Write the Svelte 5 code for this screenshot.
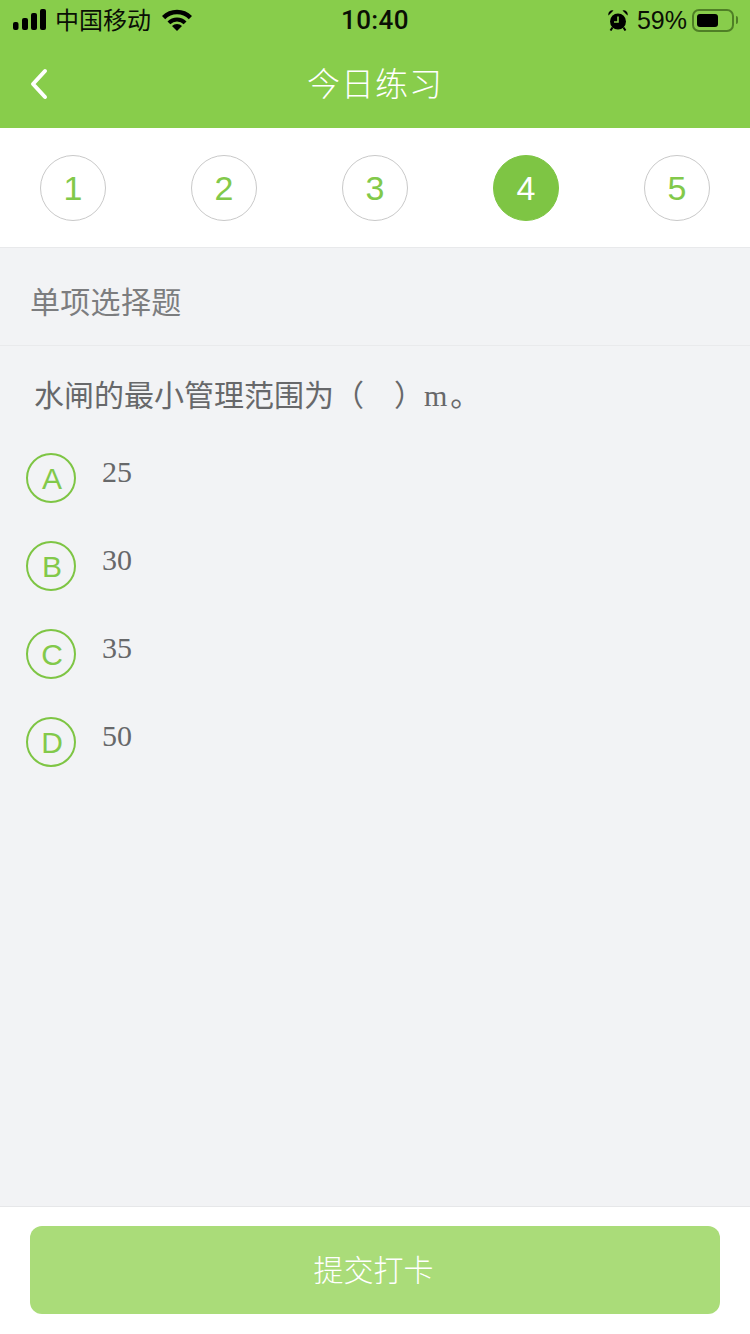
<script>
    const steps = [1, 2, 3, 4, 5];
    const current = 4;
    const options = [
        { key: "A", text: "25" },
        { key: "B", text: "30" },
        { key: "C", text: "35" },
        { key: "D", text: "50" }
    ];
</script>

<div class="page">
    <header class="top">
        <div class="status">
            <div class="status-left">
                <svg class="signal" width="33" height="21" viewBox="0 0 33 21">
                    <rect x="0" y="13" width="5.5" height="8" rx="2" />
                    <rect x="9" y="9" width="6" height="12" rx="2" />
                    <rect x="18" y="4" width="6" height="17" rx="2" />
                    <rect x="27" y="0" width="6" height="21" rx="2" />
                </svg>
                <span class="carrier">中国移动</span>
                <svg class="wifi" width="30" height="22" viewBox="0 0 30 22">
                    <path d="M15 22L10 17A7 7 0 0 1 20 17z" />
                    <path d="M6.9 13.9A11.5 11.5 0 0 1 23.1 13.9" fill="none" stroke="#000" stroke-width="4" />
                    <path d="M1.6 8.6A19 19 0 0 1 28.4 8.6" fill="none" stroke="#000" stroke-width="4.5" />
                </svg>
            </div>
            <span class="time">10:40</span>
            <div class="status-right">
                <svg class="alarm" width="20" height="22" viewBox="0 0 20 22">
                    <circle cx="10" cy="12.5" r="8" />
                    <path d="M0.5 6.5A4 4 0 0 1 5.5 1.5zM19.5 6.5A4 4 0 0 0 14.5 1.5z" />
                    <path d="M4.5 18.5l-2 3M15.5 18.5l2 3" stroke="#000" stroke-width="2" />
                    <path d="M10 7.5v5.5H6" fill="none" stroke="#88cd4b" stroke-width="1.6" />
                </svg>
                <span class="percent">59%</span>
                <div class="battery">
                    <div class="battery-body"><div class="battery-fill"></div></div>
                    <div class="battery-cap"></div>
                </div>
            </div>
        </div>
        <div class="nav">
            <svg class="back" width="20" height="32" viewBox="0 0 20 32">
                <path d="M16 3L4 16l12 13" fill="none" stroke="#fff" stroke-width="4" stroke-linecap="round" stroke-linejoin="round" />
            </svg>
            <h1>今日练习</h1>
        </div>
    </header>

    <div class="steps">
        {#each steps as step}
            <div class="step" class:active={step === current}>{step}</div>
        {/each}
    </div>

    <main class="body">
        <div class="section">单项选择题</div>
        <p class="question">水闸的最小管理范围为（<span class="blank"></span>）<span class="latin">m</span>。</p>
        <ul class="options">
            {#each options as option}
                <li>
                    <span class="badge">{option.key}</span>
                    <span class="answer">{option.text}</span>
                </li>
            {/each}
        </ul>
    </main>

    <footer class="bottom">
        <button type="button">提交打卡</button>
    </footer>
</div>

<style>
    :global(body) {
        background: #f2f3f5;
    }

    .page {
        display: flex;
        flex-direction: column;
        width: 750px;
        height: 1334px;
        font-family: "Noto Sans CJK SC", "Liberation Sans", sans-serif;
        background: #f2f3f5;
    }

    .top {
        height: 128px;
        background: #88cd4b;
        flex: none;
    }

    .status {
        position: relative;
        display: flex;
        align-items: center;
        justify-content: space-between;
        height: 40px;
        padding: 0 12px 0 13px;
        color: #0a0f05;
    }

    .status-left,
    .status-right {
        display: flex;
        align-items: center;
    }

    .signal {
        margin-top: -1px;
    }

    .carrier {
        margin-left: 9px;
        margin-top: -2px;
        font-size: 24px;
        line-height: 40px;
    }

    .wifi {
        margin-left: 11px;
        margin-top: -1px;
    }

    .time {
        position: absolute;
        left: 341px;
        top: 0;
        font-family: Roboto, "Liberation Sans", sans-serif;
        font-size: 26px;
        line-height: 40px;
        font-weight: 500;
        letter-spacing: 0.4px;
    }

    .percent {
        margin-left: 9px;
        font-family: "Liberation Sans", sans-serif;
        font-size: 25px;
        line-height: 40px;
    }

    .battery {
        display: flex;
        align-items: center;
        margin-left: 5px;
    }

    .battery-body {
        width: 42px;
        height: 23px;
        padding: 3px;
        box-sizing: border-box;
        border: 2px solid #4f7f26;
        border-radius: 7px;
    }

    .battery-fill {
        width: 21px;
        height: 100%;
        background: #000;
        border-radius: 3px;
    }

    .battery-cap {
        width: 2px;
        height: 8px;
        margin-left: 2px;
        background: #4f7f26;
        border-radius: 0 2px 2px 0;
    }

    .nav {
        position: relative;
        height: 88px;
    }

    .back {
        position: absolute;
        left: 29px;
        top: 28px;
    }

    h1 {
        margin: 0;
        padding-bottom: 4px;
        font-size: 33px;
        font-weight: 300;
        line-height: 84px;
        text-align: center;
        color: #fff;
        letter-spacing: 1px;
    }

    .steps {
        display: flex;
        justify-content: space-between;
        flex: none;
        height: 120px;
        padding: 27px 40px 0;
        box-sizing: border-box;
        background: #fff;
        border-bottom: 1px solid #e8e9eb;
    }

    .step {
        display: flex;
        align-items: center;
        justify-content: center;
        width: 66px;
        height: 66px;
        box-sizing: border-box;
        border: 1px solid #c9c9c9;
        border-radius: 50%;
        font-family: "Liberation Sans", sans-serif;
        font-size: 34px;
        color: #82c94a;
    }

    .step.active {
        background: #7ec544;
        border-color: #7ec544;
        color: #fff;
    }

    .body {
        flex: 1;
    }

    .section {
        height: 98px;
        padding-left: 30px;
        box-sizing: border-box;
        font-size: 30px;
        letter-spacing: 0.3px;
        line-height: 105px;
        color: #7c7d7f;
        border-bottom: 1px solid #e9eaec;
    }

    .question {
        margin: 0;
        padding: 25px 0 0 34px;
        font-size: 30px;
        line-height: 44px;
        color: #67686a;
    }

    .blank {
        display: inline-block;
        width: 30px;
    }

    .latin {
        margin-right: 3px;
        font-family: "Liberation Serif", serif;
    }

    .options {
        list-style: none;
        margin: 35px 0 0;
        padding: 0 0 0 26px;
    }

    .options li {
        display: flex;
        height: 88px;
    }

    .badge {
        display: flex;
        align-items: center;
        justify-content: center;
        width: 50px;
        height: 50px;
        box-sizing: border-box;
        padding: 2px 0 0 2px;
        border: 2px solid #7ec544;
        border-radius: 50%;
        font-family: "Liberation Sans", sans-serif;
        font-size: 30px;
        color: #82c94a;
    }

    .answer {
        margin-left: 26px;
        font-family: "Liberation Serif", serif;
        font-size: 30px;
        line-height: 38px;
        color: #67686a;
    }

    .bottom {
        flex: none;
        height: 128px;
        padding: 19px 30px 0;
        box-sizing: border-box;
        background: #fff;
        border-top: 1px solid #e6e7e9;
    }

    button {
        display: block;
        width: 100%;
        height: 88px;
        padding: 0 3px 4px 0;
        border: 0;
        border-radius: 12px;
        background: #aadc79;
        color: #fff;
        font-family: inherit;
        font-size: 30px;
        font-weight: 300;
    }
</style>
